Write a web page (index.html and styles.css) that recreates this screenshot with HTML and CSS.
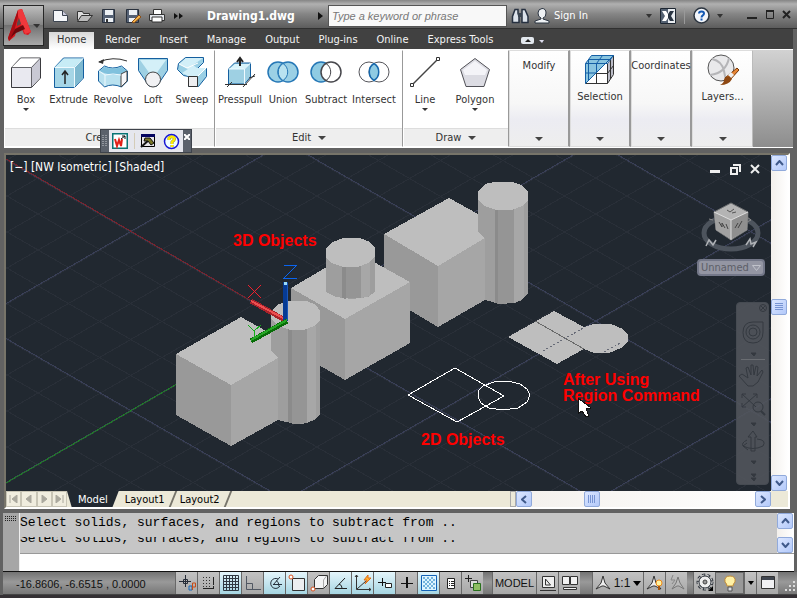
FILE: index.html
```html
<!DOCTYPE html>
<html lang="en">
<head>
<meta charset="utf-8">
<title>Drawing1.dwg</title>
<link rel="stylesheet" href="styles.css">
</head>
<body>
<div class="app">
<header class="titlebar">
  <button class="app-button" aria-label="Application menu">
    <svg width="38" height="38" viewBox="0 0 38 38"><path d="M4 31 14 3 18 2 27 25 24 28 20 27 18 22 12 25 11 29 5 34Z" fill="#d81a20"/><path d="M14 3 18 2 27 25 21 27 14 9Z" fill="#f0383c"/><path d="M4 31 14 3 14 9 9 29 5 34Z" fill="#a80d14"/><path d="m11 22 8-4 2 4-9 4-5 4Z" fill="#6e080c"/><path d="m13 16 2-5 2 6-4 2Z" fill="#5a4a4a"/><path d="M29 17h7l-3 4Z" fill="#333"/></svg>
  </button>
  <div class="quick">
    <button aria-label="New"><svg width="18" height="16"><path d="M1.500 2.500h9l5 5v6h-14z" fill="#f4f6f9" stroke="#3c4450"/><path d="M10.500 2.500v5h5" fill="#ccd" stroke="#3c4450"/></svg></button>
    <button aria-label="Open"><svg width="18" height="16"><path d="M1.500 12.500v-9h5l1 2h6v2" fill="#ddd" stroke="#333"/><path d="m1.500 13.500 4-6h11l-5 6z" fill="#bbb" stroke="#333"/></svg></button>
    <button aria-label="Save"><svg width="18" height="16"><path d="M2.500 1.500h12v13h-12z" fill="#556174" stroke="#29313d"/><path d="M5 2h8v5H5zM5 10h8v4H5z" fill="#edf1f5"/><path d="M6 11h2v3H6z" fill="#333"/></svg></button>
    <button aria-label="Save as"><svg width="18" height="16"><path d="M2.500 1.500h12v13h-12z" fill="#556174" stroke="#29313d"/><path d="M5 2h8v5H5zM5 10h6v4H5z" fill="#edf1f5"/><path d="m8 14 7-7 2 2-7 6z" fill="#f6b64c" stroke="#8c4d14"/></svg></button>
    <button aria-label="Plot"><svg width="18" height="16"><path d="M5.500 1.500h8v5h-8z" fill="#fff" stroke="#333"/><path d="M1.500 6.500h15v6h-15z" fill="#e4e7ec" stroke="#333"/><path d="M4 9h10v5H4z" fill="#fff" stroke="#333"/></svg></button>
    <button class="more" aria-label="More"><svg width="9" height="8"><path d="m0 1 4 3-4 3zM5 1l4 3-4 3z" fill="#111"/></svg></button>
  </div>
  <h1>Drawing1.dwg</h1>
  <svg class="title-arrow" width="6" height="10"><path d="m0 1 5 4-5 4z" fill="#111"/></svg>
  <input class="search" type="text" aria-label="Search" placeholder="Type a keyword or phrase">
  <button class="find" aria-label="Find"><svg width="18" height="18"><path d="M4 2.500h3v4l1 3v6H1.500v-6zM11 2.500h3l3 7v6h-6v-6z" fill="#dce2ea" stroke="#263040" stroke-width="1.500"/><path d="M7 6h4v4H7z" fill="#39434f"/></svg></button>
  <button class="sign"><svg width="16" height="18"><path d="M8 1.500q4 0 4 4.500T9 11v1l6 2v2H1v-2l6-2v-1Q4 10 4 6t4-4.500Z" fill="#eef1f4" stroke="#2b3441"/></svg>Sign In</button>
  <span class="grow"></span>
  <svg class="tiny" width="6" height="4"><path d="M0 0h6L3 4z" fill="#333"/></svg>
  <button class="exchange" aria-label="Exchange"><svg width="16" height="16"><path d="M.5.5h15v15H.5z" fill="#e9edf1" stroke="#1d2631"/><path d="M1 1h7v14H1z" fill="#536071"/><path d="M2 3h4l2 3v4l-2 3H2l3-5z" fill="#fff"/><path d="M14 3h-4L8 6v4l2 3h4l-3-5z" fill="#2a3543"/></svg></button>
  <button class="help" aria-label="Help"><svg width="17" height="17"><circle cx="8.500" cy="8.500" r="7.500" fill="#f2f5fa" stroke="#2c3540" stroke-width="1.500"/><path d="M6 6.500q0-2 2.500-2t2.500 2q0 1-1.200 1.800T8.500 10.500M8.500 11.500v2" fill="none" stroke="#1459b4" stroke-width="2"/></svg></button>
  <svg class="tiny" width="6" height="4"><path d="M0 0h6L3 4z" fill="#333"/></svg>
  <div class="window-buttons">
    <button aria-label="Minimize"><svg width="11" height="11"><path d="M0 8h10v2H0z" fill="#222"/></svg></button>
    <button aria-label="Maximize"><svg width="11" height="11"><path d="M2.500 2.500h7v7h-7z" fill="none" stroke="#222"/><path d="M2 2h8" stroke="#222" stroke-width="2"/></svg></button>
    <button aria-label="Close"><svg width="11" height="11"><path d="m2 2 7 7m0-7L2 9" stroke="#222" stroke-width="2"/></svg></button>
  </div>
</header>

<nav class="tabs">
  <a class="active" href="#home">Home</a><a href="#render">Render</a><a href="#insert">Insert</a><a href="#manage">Manage</a><a href="#output">Output</a><a href="#plugins">Plug-ins</a><a href="#online">Online</a><a href="#express">Express Tools</a>
  <button aria-label="Minimize ribbon"><svg width="24" height="9"><rect x="1" y="1" width="13" height="7" rx="2" fill="#e3e8ee"/><path d="m5 6 3-3 3 3z" fill="#222"/><path d="M19 4h5l-2 3z" fill="#dde"/></svg></button>
</nav>

<main class="ribbon">
  <section class="panel create">
    <div class="tools">
      <button><svg width="32" height="32"><path d="m1.500 11.500 9-9.500h20v20l-9 9.500h-20z" fill="#e9e9f0" stroke="#3a3a3e"/><path d="m2 11 9-8.500h19L21 11z" fill="#fff"/><path d="m22 11 8-8v19l-8 8z" fill="#c9c9d4"/><path d="M1.500 11.500h20v20M21.500 11.500l9-9.500" fill="none" stroke="#65656a"/></svg><span>Box</span><i></i></button>
      <button><svg width="32" height="32"><path d="m1.500 11.500 9-9.500h20v20l-9 9.500h-20z" fill="#a5d5e6" stroke="#155f9f"/><path d="m2 11 9-8.500h19L21 11z" fill="#c7ecf6"/><path d="m22 11 8-8v19l-8 8z" fill="#7eb9d0"/><path d="M1.500 11.500h20v20M21.500 11.500l9-9.500" fill="none" stroke="#effaff"/><path d="M12 28V16m-3 3 3-4 3 4" fill="none" stroke="#222" stroke-width="1.500"/></svg><span>Extrude</span></button>
      <button><svg width="32" height="32"><path d="M2 6Q16 0 30 5" fill="none" stroke="#333"/><path d="m1 6 6-3-1 5z" fill="#333"/><path d="m1.500 15 6-5q8 4 17 0l6 5v10l-6 6q-9-4-17 0l-6-6z" fill="#b9e1ef" stroke="#155f9f"/><path d="M2 15q14 6 22 3l6-3-6-4q-9 3-16 0z" fill="#80c1dd"/><path d="M24 18l6-3v10l-6 6z" fill="#f6f6f8" stroke="#444"/><path d="m2 15 6 4v11M8 19q8-2 16 0" fill="none" stroke="#effaff"/></svg><span>Revolve</span></button>
      <button><svg width="32" height="32"><path d="M1.500 2.500h29v12L20 30h-8L1.500 14.500z" fill="#9ed0e3" stroke="#155f9f"/><path d="m3 4 10 14h6L29 4z" fill="#d4f0f8"/><circle cx="16" cy="23.500" r="7.500" fill="#f1f1f3" stroke="#444"/></svg><span>Loft</span></button>
      <button><svg width="32" height="32"><path d="m1.500 13.500 1-6 7-6h18v5l-6 6h9v8l-8 10h-10v-10l-5-1z" fill="#9bd0e5" stroke="#155f9f"/><path d="m3 8 7-6h17l-10 7 4 3h9l-8 8H12l-6-3 6-4z" fill="#d2eff8"/><path d="m3 8 8 4 11-5M22 20l8-8" fill="none" stroke="#fff"/><path d="M12.500 20.500h9v10h-9z" fill="#eeeef0" stroke="#333"/></svg><span>Sweep</span></button>
    </div>
    <footer>Create<b></b></footer>
  </section>
  <section class="panel edit">
    <div class="tools">
      <button><svg width="32" height="32"><path d="m4.500 13 6-6h16v14l-6 7h-16z" fill="#9ed0e3" stroke="#155f9f"/><path d="m5 13 6-5h15l-6 5z" fill="#d8f4fb"/><path d="M4.500 13h16v15m0-15 6-6" fill="none" stroke="#effaff"/><path d="M1 28.500h22M3 31l5-5M19 31 31 18M25 22l6-2" fill="none" stroke="#333"/><path d="M16 10V3m-3 3 3-4 3 4" fill="none" stroke="#222" stroke-width="2"/></svg><span>Presspull</span></button>
      <button><svg width="32" height="32"><g fill="#9bd0e5" stroke="#2577b6" stroke-width="1.500"><circle cx="11" cy="16" r="10"/><circle cx="21" cy="16" r="10"/></g><path d="M16 7.500a10 10 0 0 1 0 17 10 10 0 0 1 0-17" fill="#b8e2f0" stroke="#2577b6"/></svg><span>Union</span></button>
      <button><svg width="32" height="32"><circle cx="11" cy="16" r="10" fill="#8fcbe3" stroke="#2577b6" stroke-width="1.500"/><circle cx="21" cy="16" r="10" fill="#fff" stroke="#47474c" stroke-width="1.500"/><path d="M16 7.500a10 10 0 0 1 0 17" fill="none" stroke="#47474c"/></svg><span>Subtract</span></button>
      <button><svg width="32" height="32"><g fill="#fff" stroke="#55555b"><circle cx="11" cy="16" r="10"/><circle cx="21" cy="16" r="10"/></g><path d="M16 7.500a10 10 0 0 1 0 17 10 10 0 0 1 0-17" fill="#8fcbe3" stroke="#1768ac" stroke-width="1.500"/></svg><span>Intersect</span></button>
    </div>
    <footer>Edit<b></b></footer>
  </section>
  <section class="panel draw">
    <div class="tools">
      <button><svg width="32" height="32"><path d="M3 29 29 3" stroke="#444" stroke-width="1.500"/><path d="M1.500 27.500h3v3h-3zM27.500 1.500h3v3h-3z" fill="#fff" stroke="#333"/></svg><span>Line</span><i></i></button>
      <button><svg width="32" height="32"><path d="m16 2.500 14.500 11L25 30.500H7L1.500 13.500z" fill="#dcdce3" stroke="#515157"/><path d="m16 5 12 9-2 5H6l-2-5z" fill="#f4f4f8"/></svg><span>Polygon</span><i></i></button>
    </div>
    <footer>Draw<b></b></footer>
  </section>
  <button class="slim"><span>Modify</span><b></b></button>
  <button class="slim pictured"><svg width="32" height="32"><path d="m1.500 9.500 6-8h22v19l-6 9h-22z" fill="#fff"/><path d="M1.500 29.500v-20l6-8h22z" fill="#8ac5df"/><path d="m23.500 9 6-7v18l-6 9z" fill="#bbbcc7"/><path d="M12.500 19v10.500M1.500 29.500h22v-20M12.500 19.500h11M23.500 29.500l6-9v-19M26.500 6v19M23.500 19.500l6-8" fill="none" stroke="#333"/><path d="M1.500 29.500v-20h22m-22 0 6-8h22l-6 8M4.500 5.500h22M18.500 1.500l-6 8v9.500H1.500M4.500 26V5.500M1.500 29.500l28-28" fill="none" stroke="#145fa5"/></svg><span>Selection</span><b></b></button>
  <button class="slim"><span>Coordinates</span><b></b></button>
  <button class="slim pictured"><svg width="32" height="32"><circle cx="14" cy="14" r="13" fill="#e9e9eb" stroke="#555"/><path d="M5 5q10 2 12 12t2 9M3 21Q19 19 22 4" fill="none" stroke="#b5b5b8" stroke-width="2"/><path d="m30 14 2 2-10 11-4-3z" fill="#e88534" stroke="#713404"/><path d="m24 18 3 3-3 3-3-3z" fill="#eee"/><path d="m22 22 3 3q-3 6-12 6 4-2 4-5t5-4z" fill="#8e4812"/></svg><span>Layers...</span><b></b></button>
  <div class="floating">
    <svg class="grip" width="6" height="14"><path d="M1 1v12M4 1v12" stroke="#c9cbd0" stroke-dasharray="1 1"/></svg>
    <div>
      <button aria-label="Publish"><svg width="16" height="16"><path d="M.5.5h15v15H.5z" fill="#fff" stroke="#087474" stroke-width="2"/><path d="m3 6 2 7 2-6 2 6 1-7" fill="none" stroke="#e02018" stroke-width="2"/><path d="M9 6l4-3m-3 0h3v3" stroke="#111" fill="none"/></svg></button>
      <button aria-label="Tools"><svg width="16" height="16"><path d="M1.500 1.500h13v12h-13z" fill="#e5e3e7" stroke="#000"/><path d="M1 1h14v3H1z" fill="#050561"/><path d="m1 14 8-7" stroke="#111" stroke-width="2"/><path d="M5 5h5l4 5-3 2-3-4H4z" fill="#777525" stroke="#111"/></svg></button>
      <button aria-label="About"><svg width="17" height="17"><circle cx="8.500" cy="8.500" r="7" fill="#f1ffff" stroke="#1515d5" stroke-width="1.500"/><path d="M6 7V5q2-2 4-1t1 3l-2 2v2m0 1v2" fill="none" stroke="#979016" stroke-width="3"/><path d="M6 7V5q2-2 4-1t1 3l-2 2v2m0 1v2" fill="none" stroke="#ffec00" stroke-width="2"/></svg></button>
    </div>
    <button class="shut" aria-label="Close toolbar"><svg width="6" height="6"><path d="m0 0 6 6M6 0 0 6" stroke="#fff" stroke-width="2"/></svg></button>
  </div>
</main>

<section class="document">
  <div class="viewport">
    <div class="canvas">
      <svg class="scene" viewBox="6 155 765 337" preserveAspectRatio="xMinYMin slice" role="img" aria-label="Isometric model">
        <path class="minor" d="M0-309l800 462m-800-426l800 462m-800-426l800 462m-800-426l800 462m-800-427l800 462m-800-426l800 462m-800-426l800 462m-800-426l800 462m-800-426l800 462m-800-427l800 462m-800-426l800 462m-800-426l800 462m-800-426l800 462m-800-426l800 462m-800-427l800 462m-800-426l800 462m-800-426l800 462m-800-426l800 462m-800-426l800 462m-800-427l800 462m-800-426l800 462m-800-426l800 462"/>
        <path class="minor" d="M0 164l800-462m-800 498l800-462m-800 498l800-462m-800 498l800-462m-800 498l800-462m-800 497l800-462m-800 498l800-462m-800 498l800-462m-800 498l800-462m-800 498l800-462m-800 497l800-462m-800 498l800-462m-800 498l800-462m-800 498l800-462m-800 498l800-462m-800 497l800-462m-800 498l800-462m-800 498l800-462m-800 498l800-462m-800 498l800-462m-800 497l800-462m-800 498l800-462"/>
        <path class="major" d="M0-202l800 462M0-23l800 462M0 156l800 462M0 335l800 462M0 307l800-462M0 486l800-462M0 665l800-462M0 844l800-462"/>
        <path d="m6 159 280 162" stroke="#7a232d"/><path d="m6 483 280-162" stroke="#207a29"/>
        <g class="solids">
          <path class="top" d="m384 234 65-36 29 16 10 24-50 28z"/><path class="left" d="m384 234 54 32v61l-54-32z"/><path class="right" d="m438 266 47-28v62l-47 27z"/>
          <path class="c1" d="M478 193h50v100l-6 7-7 3-15 1-15-4v-61l-7-7z"/><path class="c2" d="M495 205h3v99l-3-1z"/><path class="c3" d="M498 205h16v98l-16 1z"/><path class="c4" d="M514 205h10v93l-10 5z"/>
          <path class="top" d="m478 191 7-7 9-2h18l9 3 7 7v9l-6 5-10 4h-16l-11-4-7-6z"/>
          <path class="top" d="m291 288 63-37 56 31-65 37z"/><path class="left" d="m291 288 54 31v61l-54-31z"/><path class="right" d="m345 319 65-37v61l-65 37z"/>
          <path class="c1" d="M326 249h49v43l-7 5-16 2-16-2-10-5z"/><path class="c2" d="M342 260h4v39l-4-1z"/><path class="c3" d="M346 260h15v38h-15z"/><path class="c4" d="M361 260h9v36l-9 2z"/>
          <path class="top" d="m326 248 7-6 10-4h17l10 4 5 6v9l-7 6-10 4h-15l-11-4-6-5z"/>
          <path class="top" d="m176 354 65-37 36 20 4 22-50 26z"/><path class="left" d="m176 354 55 31v61l-55-31z"/><path class="right" d="m231 385 47-27v62l-47 26z"/>
          <path class="c1" d="M271 312h49v102l-6 6-11 4h-8l-17-4v-62l-7-7z"/><path class="c2" d="M288 326h4v97l-4-1z"/><path class="c3" d="M292 326h15v97l-15 1z"/><path class="c4" d="M307 326h9v92l-9 5z"/>
          <path class="top" d="m271 311 6-6 10-4h20l9 4 4 6v9l-6 6-10 4h-14l-11-4-8-7z"/>
          <path class="top" d="m508 337 46-26 30 16 9-3h18l12 5 5 6v7l-7 6-12 5h-15l-10-4-27 15z"/>
        </g>
        <path d="m535 321 49 28" stroke="#686969"/><path d="m543 351 42-24M604 352l18-10" stroke="#676b77" stroke-dasharray="2 2"/>
        <path d="m408 395 47-27 49 28-47 26z" fill="none" stroke="#fff"/><path d="m478 391 5-5 11-4 14-1 12 3 7 5 3 6-3 7-9 6-15 2-14-2-8-5-3-6z" fill="none" stroke="#fff"/>
        <path d="m251 301 34 19" stroke="#a9222a" stroke-width="5"/><path d="m251 301 34 18" stroke="#ed4e50" stroke-width="2"/>
        <path d="M285 321v-39" stroke="#063b94" stroke-width="5"/><path d="M287 320v-37" stroke="#1a56b8"/><path d="M284 283h3" stroke="#9cddfa" stroke-width="3"/>
        <path d="m251 341 36-20" stroke="#086d08" stroke-width="5"/><path d="m251 340 36-20" stroke="#26a626" stroke-width="2"/>
        <path d="m248 285 13 13m0-13-13 13" stroke="#f0202c"/><path d="M284 265h13l-13 13h13" fill="none" stroke="#0a64ee"/><path d="m248 325 6 6 7-6m-7 6v6" fill="none" stroke="#12ad18"/>
        <g class="notes"><text x="233" y="246">3D Objects</text><text x="421" y="445">2D Objects</text><text x="563" y="385">After Using</text><text x="563" y="401">Region Command</text></g>
        <path d="M578 398v16l4-3 4 6 3-1-3-7 5-1z" fill="#fff" stroke="#111"/>
      </svg>
      <div class="view-label">[−] [NW Isometric] [Shaded]</div>
      <div class="view-buttons"><button aria-label="Minimize view"><svg width="12" height="12"><path d="M1 7h10v3H1z" fill="#eee"/></svg></button><button aria-label="Restore view"><svg width="12" height="12"><path d="M4 2h7v7M2 5h6v6H2z" fill="none" stroke="#eee" stroke-width="2"/></svg></button><button aria-label="Close view"><svg width="12" height="12"><path d="m2 2 8 8m0-8-8 8" stroke="#eee" stroke-width="2"/></svg></button></div>
      <div class="cube">
        <svg width="68" height="56"><ellipse cx="34" cy="33" rx="27" ry="16" fill="none" stroke="#4d545d" stroke-width="5"/><path d="m34 3 17 9-1 18-16 10-15-10-2-18z" fill="#b4b4b4" stroke="#6f7173"/><path d="m17 12 17 8v19L19 30z" fill="#a1a1a1"/><path d="m34 20 17-8-1 18-16 9z" fill="#8f8f8f"/><path d="m17 12 17 8 17-8M34 20v20" fill="none" stroke="#ddd"/><path d="m30 10 3 2 4-3m-2 4 4-1" fill="none" stroke="#555"/><path d="m22 22 3 5v-4l3 5m1-4 2 5M38 28l3-5m0 5 4-7" fill="none" stroke="#444"/><path d="m9 46 3-6 4 5 3-5" fill="none" stroke="#b0b3b7" stroke-width="1.500"/><path d="m49 45 4-6 1 5 5-2-3 5" fill="none" stroke="#b0b3b7" stroke-width="1.500"/><path d="m12 19 4 1m34-3 4 3-4 2" fill="none" stroke="#8a8a8a"/></svg>
        <button>Unnamed<svg width="9" height="6"><path d="M.5.5h8l-4 5z" fill="none" stroke="#c0c2ca"/></svg></button>
      </div>
      <div class="navbar" role="toolbar" aria-label="Navigation">
        <svg width="31" height="181" fill="none" stroke="#343940"><circle cx="26" cy="5" r="3.500"/><path d="m24 3 4 4m0-4-4 4"/><path d="M16 19h10v10q0 11-10 11T6 29.500 16 19Z"/><circle cx="16" cy="29" r="7"/><circle cx="16" cy="29" r="4"/><path d="M4 56.500h24" stroke="#6a6d72"/><path d="m5 71 6 4-2-10 2-1 3 8V62h2l1 10 2-9 2 1-1 9 5-6 1 2-5 10-5 4h-5l-9-10z"/><path d="m5 91 14 13M20 91 5 104M5 95v-4h4m7 0h4v4M5 100v4h4"/><circle cx="21" cy="104" r="5"/><path d="m24 108 4 4" stroke-width="2"/><path d="M14 148v-14h-3l5-6 4 6h-2v14z"/><path d="M10 137q-6 3-4 6 10 5 20 0 4-6-6-7M6 143l4-3m-4 3 5 4"/><path fill="#34393f" d="M14 50h5l-2 3zM14 120h5l-2 3zM14 158h5l-2 3zM14 171h5l-2 3zM14 175h5l-2 3z"/></svg>
      </div>
    </div>
    <div class="scroll vertical">
      <button aria-label="Scroll up"><svg width="9" height="6"><path d="m1 5 3.500-4L8 5"/></svg></button><span class="above"></span><button class="thumb" aria-label="Position"><svg width="8" height="8"><path class="lines" d="M0 .5h8M0 2.500h8M0 4.500h8M0 6.500h8"/></svg></button><span class="below"></span><button aria-label="Scroll down"><svg width="9" height="6"><path d="m1 1 3.500 4L8 1"/></svg></button>
    </div>
  </div>
  <div class="sheets">
    <div class="sheet-nav"><button aria-label="First"><svg width="9" height="8"><path d="M1 0v8M8 0 3 4l5 4z"/></svg></button><button aria-label="Previous"><svg width="9" height="8"><path d="M7 0 2 4l5 4z"/></svg></button><button aria-label="Next"><svg width="9" height="8"><path d="m2 0 5 4-5 4z"/></svg></button><button aria-label="Last"><svg width="9" height="8"><path d="M8 0v8M1 0l5 4-5 4z"/></svg></button></div>
    <a class="sheet active" href="#model">Model</a><a class="sheet" href="#layout1">Layout1</a><a class="sheet" href="#layout2">Layout2</a>
    <div class="scroll horizontal">
      <em></em><button aria-label="Scroll left"><svg width="6" height="9"><path d="M5 1 1 4.500 5 8"/></svg></button><span class="before"></span><button class="thumb" aria-label="Position"><svg width="8" height="8"><path class="lines" d="M.5 0v8M2.500 0v8M4.500 0v8M6.500 0v8"/></svg></button><span class="after"></span><button aria-label="Scroll right"><svg width="6" height="9"><path d="m1 1 4 3.500L1 8"/></svg></button>
    </div>
  </div>
</section>

<section class="command">
  <div class="handle"><svg width="12" height="6"><path d="M0 .5h12M0 2.500h12M0 4.500h12" stroke="#222" stroke-dasharray="1 1"/></svg></div>
  <div class="console">
    <div class="history"><div class="lines-text"><p>Select solids, surfaces, and regions to subtract from ..</p><p class="cut"><span>Select solids, surfaces, and regions to subtract from ..</span></p></div>
      <div class="scroll vertical"><button aria-label="Earlier"><svg width="9" height="6"><path d="m1 5 3.500-4L8 5"/></svg></button><span></span><button aria-label="Later"><svg width="9" height="6"><path d="m1 1 3.500 4L8 1"/></svg></button></div></div>
    <input type="text" aria-label="Command">
  </div>
</section>

<footer class="status">
  <output>-16.8606, -6.6515 , 0.0000</output>
  <div class="toggles">
    <button aria-label="Infer constraints"><svg width="20" height="20"><path d="M2 8.500h12M8.500 2v12M6.500 6.500h4v4h-4z" fill="none" stroke="#252c38"/><path d="M12 17v-4h3v4z" fill="none" stroke="#1769ba"/><path d="M15.500 17v-7h3v4h-3" fill="none" stroke="#c94b14"/></svg></button>
    <button aria-label="Snap"><svg width="20" height="20"><path d="M4 4.500h9M4 7.500h9M4 10.500h9M4 13.500h9" stroke="#333" stroke-dasharray="1 2"/><path d="M14.500 4v8m0 1v2M4 15.500h11" stroke="#222"/></svg></button>
    <button class="on" aria-label="Grid"><svg width="20" height="20"><path d="M2.500 2.500h15v15h-15zM5.500 2v15M8.500 2v15M11.500 2v15M14.500 2v15M2 5.500h15M2 8.500h15M2 11.500h15M2 14.500h15" fill="none" stroke="#303842"/></svg></button>
    <button aria-label="Ortho"><svg width="20" height="20"><path d="M3.500 3v13.500H18M4 10.500h5.500v6" fill="none" stroke="#505762"/></svg></button>
    <button class="on" aria-label="Polar"><svg width="20" height="20"><path d="M13 6a5 5 0 1 0 2 7M8 12l7-8M8 11.500h9m-6-4q3 1 3 6" fill="none" stroke="#252f3b"/></svg></button>
    <button class="on" aria-label="Object snap"><svg width="20" height="20"><path d="M5.500 5.500h12v12h-12z" fill="#eceef0" stroke="#333"/><circle cx="4" cy="4" r="2" fill="#fff" stroke="#d64e1b"/></svg></button>
    <button aria-label="3D object snap"><svg width="20" height="20"><path d="m5.500 6.500 4-4h9v9l-4 4h-9z" fill="#f3f4f5" stroke="#333"/><path d="M14.500 7v8m0-8 3-4" stroke="#aaa"/><circle cx="4" cy="16" r="2" fill="#fff" stroke="#d64e1b"/></svg></button>
    <button class="on" aria-label="Object tracking"><svg width="20" height="20"><path d="m14 5-10 10.500h12M8 11q3 1 3 4" fill="none" stroke="#222"/></svg></button>
    <button class="on" aria-label="Dynamic UCS"><svg width="20" height="20"><path d="M3.500 2v14.500H18M4 16l9-8M2 4l1.500-2L5 4m11 11 2 1.500-2 1.500" fill="none" stroke="#333"/><path d="m15 2-4 5h3l-2 4 6-6h-3z" fill="#ffb030" stroke="#df6d18"/></svg></button>
    <button class="on" aria-label="Dynamic input"><svg width="20" height="20"><path d="M3 9.500h8M7.500 5v8" stroke="#111"/><path d="M10.500 10.500h6v4h-6z" fill="#fff" stroke="#222"/></svg></button>
    <button aria-label="Line weight"><svg width="20" height="20"><path d="M4 10.500h12" stroke="#111"/><path d="M10 4v11" stroke="#111" stroke-width="2"/></svg></button>
    <button class="on" aria-label="Transparency"><svg width="20" height="20"><defs><pattern id="check" width="4" height="4" patternUnits="userSpaceOnUse"><path d="M0 0h2v2H0zM2 2h2v2H2z" fill="#72b3dc"/></pattern></defs><path d="M2.500 2.500h15v15h-15z" fill="#dcf4ff" stroke="#1262b7"/><path d="M4 4h12v12H4z" fill="url(#check)"/></svg></button>
    <button aria-label="Quick properties"><svg width="20" height="20"><path d="M6.500 5.500h7v10h-7z" fill="#fff" stroke="#222"/><path d="M8 8.500h1M8 10.500h1M8 12.500h1m1-4h3m-3 2h3m-3 2h3" stroke="#222"/></svg></button>
    <button aria-label="Selection cycling"><svg width="20" height="20"><path d="M2 5.500h7M5.500 2v7" stroke="#222"/><path d="M7.500 7.500h7v7h-7z" fill="#ddd" stroke="#444"/><path d="M10.500 10.500h7v7h-7z" fill="#8ebd62" stroke="#28711c"/></svg></button>
  </div>
  <div class="group"><button class="model">MODEL</button><button aria-label="Layout"><svg width="20" height="20"><path d="M4.500 3.500h12v11h-12zM2 17.500h16" fill="#eee" stroke="#333"/><path d="M7.500 6v6h5z" fill="none" stroke="#333"/></svg></button><button aria-label="Quick view"><svg width="20" height="20"><path d="M2.500 3.500h7v8h-7zM10.500 3.500h7v8h-7zM3.500 14.500h13v2h-13z" fill="#f0f0f0" stroke="#333"/></svg></button></div>
  <div class="group scale"><button class="ratio"><svg width="16" height="16"><path d="m8 1 2 7 5 6-6-3H7l-6 3 5-6z" fill="#eee" stroke="#333"/></svg>1:1<svg width="8" height="5"><path d="M0 0h8L4 5z"/></svg></button><button aria-label="Annotation visibility"><svg width="20" height="20"><path d="m9 3 2 7 5 6-6-3H8l-6 3 5-6z" fill="#eee" stroke="#333"/><circle cx="14" cy="10" r="3" fill="#fff3a0" stroke="#ef8817"/><path d="M14 13v4" stroke="#aa5811" stroke-width="2"/></svg></button><button aria-label="Annotation scales"><svg width="20" height="20"><path d="m11 4 2 6 4 6-5-3h-2l-5 3 4-6z" fill="#bbb" stroke="#777"/><path d="m6 2-2 5h4l-3 4" fill="none" stroke="#888"/></svg></button></div>
  <div class="group end"><button aria-label="Workspace"><svg width="20" height="20"><circle cx="10" cy="9" r="7" fill="none" stroke="#363b42" stroke-width="3" stroke-dasharray="3 2"/><circle cx="10" cy="9" r="6" fill="#eee" stroke="#363b42"/><circle cx="10" cy="9" r="7" fill="none" stroke="#eee" stroke-dasharray="2 3"/><circle cx="10" cy="9" r="2" fill="#999" stroke="#444"/><path d="M13 18h5v-5z"/></svg></button><button class="bulb" aria-label="Hardware acceleration"><svg width="20" height="20"><path d="M7 13q0-2-2-4-1-6 5-6t5 6q-2 2-2 4z" fill="#fff1a6" stroke="#c48d35"/><path d="M8 14h4v4H8z" fill="#d8dae0" stroke="#555"/></svg></button><button class="down" aria-label="Status menu"><svg width="6" height="4"><path d="M0 0h6L3 4z"/></svg></button><button aria-label="Clean screen"><svg width="20" height="20"><path d="M3.500 3.500h13v12h-13z" fill="#f1f1f3" stroke="#333"/><path d="M4 4h12v3H4z" fill="#404650"/></svg></button></div>
  <svg class="resize" width="12" height="12"><path d="M9 1h2v2H9zM5 5h2v2H5zM9 5h2v2H9zM1 9h2v2H1zM5 9h2v2H5zM9 9h2v2H9z" fill="#ddd"/></svg>
</footer>
</div>
</body>
</html>
```
FILE: styles.css
```css
* { box-sizing: border-box; }
body { margin: 0; background: #626262; color: #333; font: 11px "DejaVu Sans Condensed", "DejaVu Sans", sans-serif; }
button { border: 0; padding: 0; background: none; color: inherit; font: inherit; }
a { color: inherit; text-decoration: none; }
svg { display: block; flex: none; }
p, h1 { margin: 0; }
.app { height: 100vh; display: flex; flex-direction: column; overflow: hidden; border-bottom: 3px solid #343034; }

/* Title bar and tabs */
.titlebar { position: relative; height: 29px; flex: none; display: flex; align-items: center; padding: 3px 5px 0 52px; color: #fff; background: linear-gradient(#858585, #b0b0b0 4px, #858585 14px, #5c5c5c); border-bottom: 1px solid #303030; }
.app-button { position: absolute; left: 3px; top: 5px; z-index: 2; width: 41px; height: 41px; border: 1px solid #272727; background: linear-gradient(#bdbdbd, #858585 48%, #717171 50%, #aaa); }
.quick { display: flex; gap: 6px; width: 155px; align-items: center; }
.quick .more { margin-left: 2px; }
.titlebar h1 { font-size: 12px; font-weight: bold; width: 111px; }
.title-arrow { margin-right: 4px; }
.search { width: 179px; height: 22px; padding: 0 3px; border: 1px solid #555; background: #f8f8f8; font: italic 11px "Liberation Sans", sans-serif; }
.search::placeholder { color: #777; opacity: 1; }
.find { margin: 0 5px 0 4px; }
.sign { display: flex; align-items: center; gap: 4px; }
.grow { flex: 1; }
.exchange { margin: 0 8px; padding-right: 8px; border-right: 1px solid #999; }
.help { margin-right: 7px; }
.window-buttons { display: flex; gap: 6px; margin-left: 24px; padding-bottom: 3px; }
.tabs { flex: none; height: 20px; display: flex; align-items: flex-end; gap: 3px; margin: 0 4px; padding-left: 45px; color: #f4f4f4; background: #414141; }
.tabs a { height: 17px; line-height: 15px; padding: 0 8px; }
.tabs .active { color: #333; background: linear-gradient(#d8d8d8, #fff); }
.tabs button { margin: 0 0 4px 16px; }

/* Ribbon */
.ribbon { position: relative; flex: none; height: 99px; display: flex; margin: 0 4px; background: linear-gradient(#d2d2d2, #8d8d8d); border-top: 1px solid #fff; border-bottom: 1px solid #fff; }
.panel { display: flex; flex-direction: column; background: #fff; border: 1px solid #fff; border-right-color: #999; }
.create { width: 211px; }
.edit { width: 188px; }
.draw { width: 106px; }
.tools { flex: 1; display: grid; padding-top: 5px; }
.create .tools { grid-template-columns: 42px 43px 46px 34px 44px; }
.edit .tools { grid-template-columns: 48px 38px 48px 48px; }
.draw .tools { grid-template-columns: 42px 58px; }
.tools button { display: flex; flex-direction: column; align-items: center; line-height: 14px; white-space: nowrap; }
.tools span { margin-top: 5px; }
.tools i { border: 3px solid transparent; border-top-color: #333; border-bottom: 0; margin-top: 1px; }
.panel footer { height: 18px; display: flex; align-items: center; justify-content: center; gap: 7px; background: #eee; border-top: 1px solid #ddd; }
.ribbon b { border: 4px solid transparent; border-top-color: #444; border-bottom: 0; }
.slim { width: 61px; display: flex; flex-direction: column; align-items: center; white-space: nowrap; padding: 8px 0 5px; border: 1px solid #ddd; border-right: 2px solid #999; background: linear-gradient(#fff, #f7f7f7 55%, #ececf2 72%, #eee); }
.slim b { margin-top: auto; }
.pictured { padding-top: 3px; }
.pictured span { margin-top: 4px; }
.slim + .slim:last-of-type { border-right: 1px solid #bbb; }
.floating { position: absolute; left: 96px; top: 79px; z-index: 3; width: 92px; height: 24px; display: flex; border: 1px solid #3e434b; background: #5b616b; }
.floating .grip { margin: 4px 1px; }
.floating div { flex: 1; display: flex; align-items: center; justify-content: space-around; background: #e6e7ee; }
.floating div button + button { border-left: 1px solid #d4ccb8; padding-left: 5px; }
.floating div button:last-child { border: 0; padding: 0; }
.floating .shut { align-self: flex-start; margin: 4px 1px; }

/* Drawing window */
.document { flex: 1; min-height: 0; display: flex; flex-direction: column; margin: 5px 7px 4px 4px; border: 2px solid #777469; border-right-color: #fff; border-bottom-color: #fff; background: #ece9d8; }
.viewport { flex: 1; min-height: 0; display: flex; }
.canvas { position: relative; flex: 1; min-width: 0; overflow: hidden; background: #212830; }
.scene { width: 100%; height: 100%; shape-rendering: crispEdges; }
.minor { fill: none; stroke: #292f38; }
.major { fill: none; stroke: #393f57; }
.top { fill: #bebebe; }
.left { fill: #999; }
.right { fill: #a6a6a6; }
.c1 { fill: #9e9e9e; }
.c2 { fill: #8b8b8b; }
.c3 { fill: #959595; }
.c4 { fill: #a7a7a7; }
.notes { fill: #f00; font: bold 16px "Liberation Sans", sans-serif; }
.view-label { position: absolute; left: 4px; top: 4px; color: #fff; font-size: 12px; line-height: 16px; }
.view-buttons { position: absolute; right: 10px; top: 8px; display: flex; gap: 8px; }
.cube { position: absolute; right: 6px; top: 45px; text-align: center; }
.cube svg { margin: auto; }
.cube button { width: 68px; height: 17px; margin-top: 3px; display: flex; align-items: center; padding: 0 2px; color: #5c5e67; border: 2px solid #747889; border-radius: 4px; background: #9496a3; }
.cube button svg { margin-right: 0; }
.navbar { position: absolute; right: 2px; top: 147px; border: 1px solid #464b52; border-radius: 4px; background: #53575ddd; }
.scroll { display: flex; background: linear-gradient(90deg, #f3f0ec, #fff); }
.scroll.vertical { flex: none; flex-direction: column; width: 17px; }
.scroll span { flex: 1; }
.scroll .above { flex: 4; }
.scroll .below { flex: 5; }
.scroll button { width: 16px; height: 16px; flex: none; display: flex; align-items: center; justify-content: center; border: 1px solid #91aadb; border-radius: 2px; background: linear-gradient(135deg, #dce7ff, #b3c9fa); }
.scroll path { fill: none; stroke: #405a8b; stroke-width: 2; }
.scroll .lines { stroke: #7794d3; stroke-width: 1; }
.sheets { flex: none; height: 16px; display: flex; align-items: stretch; color: #000; }
.sheet-nav { display: flex; width: 61px; }
.sheet-nav button { flex: 1; display: flex; align-items: center; justify-content: center; border: 1px solid #c8c5b6; background: #f0eddf; }
.sheet-nav path { fill: #aaa89e; stroke: #aaa89e; }
.sheet { position: relative; z-index: 1; padding: 0 9px 0 6px; line-height: 18px; }
.sheet::after { content: ""; position: absolute; z-index: -1; inset: 0; border-right: 2px solid #77756b; transform: skewX(-22deg); }
.sheet.active { padding: 0 11px; color: #fff; background: #212830; clip-path: polygon(0 0, 100% 0, 88% 100%, 9% 100%); }
.sheet.active::after { display: none; }
.scroll.horizontal { width: 261px; margin-left: auto; margin-right: 17px; }
.horizontal em { width: 6px; border: 1px solid #aaa; background: #ece9d8; }
.horizontal .before { flex: 1; }
.horizontal .after { flex: 3; }

/* Command line */
.command { flex: none; height: 59px; display: flex; margin: 0 3px; background: #c6c6c6; border-bottom: 1px solid #111; }
.handle { width: 17px; padding: 3px 2px; background: #a6a6a6; border-right: 1px solid #eee; }
.console { flex: 1; min-width: 0; display: flex; flex-direction: column; }
.history { flex: 1; display: flex; color: #000; font: 13px "Liberation Mono", monospace; }
.lines-text { flex: 1; white-space: pre; }
.lines-text p { height: 20px; line-height: 20px; }
.lines-text .cut { height: 9px; margin-top: 4px; overflow: hidden; display: flex; align-items: flex-end; line-height: 14px; }
.console input { width: 100%; height: 18px; border: 0; border-top: 1px solid #999; background: #fff; }

/* Status bar */
.status { flex: none; height: 23px; display: flex; align-items: stretch; margin-left: 3px; color: #111; background: linear-gradient(#737373, #999 45%, #777); font: 12px "Liberation Sans", sans-serif; border-bottom: 1px solid #444; }
.status output { width: 172px; padding-left: 13px; font-size: 11px; line-height: 24px; }
.toggles, .group { display: flex; }
.status button { min-width: 22px; display: flex; align-items: center; justify-content: center; border-left: 1px solid #686868; background: linear-gradient(#c2c2c2, #a8a8a8); }
.status .on { background: linear-gradient(#e4f5fb, #a6d5e2); }
.group { margin-left: 9px; }
.status .model { width: 44px; font-size: 11px; }
.group.scale { margin-left: 12px; }
.status .ratio { width: 51px; gap: 3px; }
.group.end { margin-left: 6px; }
.status .bulb { width: 29px; border: 1px solid #666; background: #999; }
.status .down { min-width: 12px; }
.resize { margin: auto 1px 2px auto; }
```
